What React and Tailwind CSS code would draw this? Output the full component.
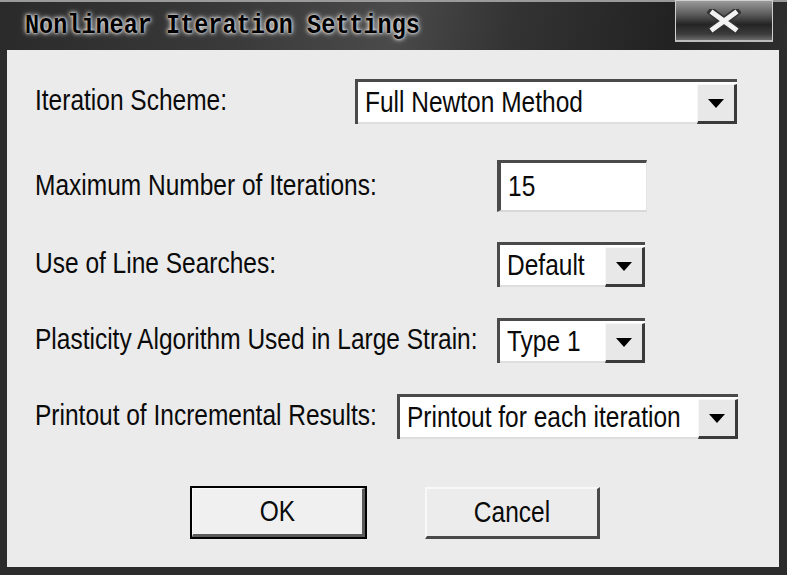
import React from "react";

// sunken / raised win-classic style helpers
const Txt = ({ children }) => (
  <span className="inline-block origin-center scale-y-[1.2] text-[24.5px] leading-none text-[#0a0a0a] whitespace-nowrap">
    {children}
  </span>
);

function Combo({ value, w }) {
  return (
    <div className={`flex h-[45px] bg-white border-l-[3px] border-t-[3px] border-[#4a4a4a] ${w}`}>
      <div className="flex-1 flex items-center pl-[7px] border-b-2 border-[#dedede]">
        <Txt>{value}</Txt>
      </div>
      <div className="w-[40px] mt-[2px] flex items-center justify-center bg-[#e8e8e8] border-t border-l border-t-[#f7f7f7] border-l-[#f7f7f7] border-r-[3px] border-b-[3px] border-r-[#3a3a3a] border-b-[#3a3a3a]">
        <svg width="16" height="9" viewBox="0 0 16 9">
          <path d="M0 0H16L8 9Z" fill="#000" />
        </svg>
      </div>
    </div>
  );
}

function Row({ label, labelW, mt, children }) {
  return (
    <div className={`flex items-center ${mt}`}>
      <div className={`flex-none ${labelW}`}>
        <Txt>{label}</Txt>
      </div>
      {children}
    </div>
  );
}

export default function App() {
  return (
    <div className="w-[787px] h-[575px] flex flex-col bg-[#2c2c2c] font-['Liberation_Sans',Arial,sans-serif]">
      {/* title bar */}
      <div className="h-[50px] flex-none flex items-start border-t-2 border-[#9a9a9a] bg-[linear-gradient(100deg,#2a2a2a_0%,#3a3a3a_30%,#4a4a4a_50%,#333_65%,#222_85%,#2e2e2e_100%)]">
        <div className="pl-[25px] pt-[12px] flex-1">
          <span className="inline-block origin-left scale-y-[1.2] font-['Liberation_Mono',monospace] font-bold text-[23.5px] leading-none text-black [text-shadow:0_0_2px_#f0f0f0,0_0_4px_#d8d8d8,0_0_6px_#bdbdbd]">
            Nonlinear Iteration Settings
          </span>
        </div>
        <div className="mr-[14px] mt-[-2px] w-[98px] h-[42px] flex items-center justify-center border border-[#d0d0d0] border-b-2 border-b-[#bdbdbd] bg-[linear-gradient(180deg,#9a9a9a_0%,#5a5a5a_35%,#242424_60%,#3c3c3c_85%,#6a6a6a_100%)]">
          <svg width="34" height="24" viewBox="0 0 34 24">
            <path d="M5 3L29 21M29 3L5 21" stroke="#333" strokeWidth="8" strokeLinecap="square" />
            <path d="M6 4L28 20M28 4L6 20" stroke="#f2f2f2" strokeWidth="5" strokeLinecap="square" />
          </svg>
        </div>
      </div>

      {/* body */}
      <div className="flex-1 ml-[7px] mr-[8px] mb-[8px] bg-[#ebebeb] flex flex-col pl-[28px] pt-[29px]">
        <Row label="Iteration Scheme:" labelW="w-[320px]" mt="mt-0">
          <Combo value="Full Newton Method" w="w-[382px]" />
        </Row>

        <Row label="Maximum Number of Iterations:" labelW="w-[462px]" mt="mt-[36px]">
          <div className="w-[150px] h-[52px] flex items-center pl-[7px] bg-white border-l-4 border-t-[3px] border-[#4a4a4a] border-r border-b-2 border-r-[#e4e4e4] border-b-[#d8d8d8]">
            <Txt>15</Txt>
          </div>
        </Row>

        <Row label="Use of Line Searches:" labelW="w-[462px]" mt="mt-[30px]">
          <Combo value="Default" w="w-[148px]" />
        </Row>

        <Row label="Plasticity Algorithm Used in Large Strain:" labelW="w-[462px]" mt="mt-[31px]">
          <Combo value="Type 1" w="w-[148px]" />
        </Row>

        <Row label="Printout of Incremental Results:" labelW="w-[362px]" mt="mt-[31px]">
          <Combo value="Printout for each iteration" w="w-[341px]" />
        </Row>

        <div className="flex mt-[47px] pl-[155px] gap-[58px] items-start">
          <div className="w-[177px] h-[53px] border-2 border-black bg-[#f0f0f0]">
            <div className="h-full flex items-center justify-center border-r-[3px] border-b-[3px] border-[#5a5a5a] border-t border-l border-t-[#fafafa] border-l-[#fafafa]">
              <Txt>OK</Txt>
            </div>
          </div>
          <div className="w-[175px] h-[52px] mt-[1px] flex items-center justify-center bg-[#ececec] border-t-2 border-l-2 border-[#f8f8f8] border-r-[3px] border-b-[3px] border-r-[#4a4a4a] border-b-[#4a4a4a]">
            <Txt>Cancel</Txt>
          </div>
        </div>
      </div>
    </div>
  );
}
